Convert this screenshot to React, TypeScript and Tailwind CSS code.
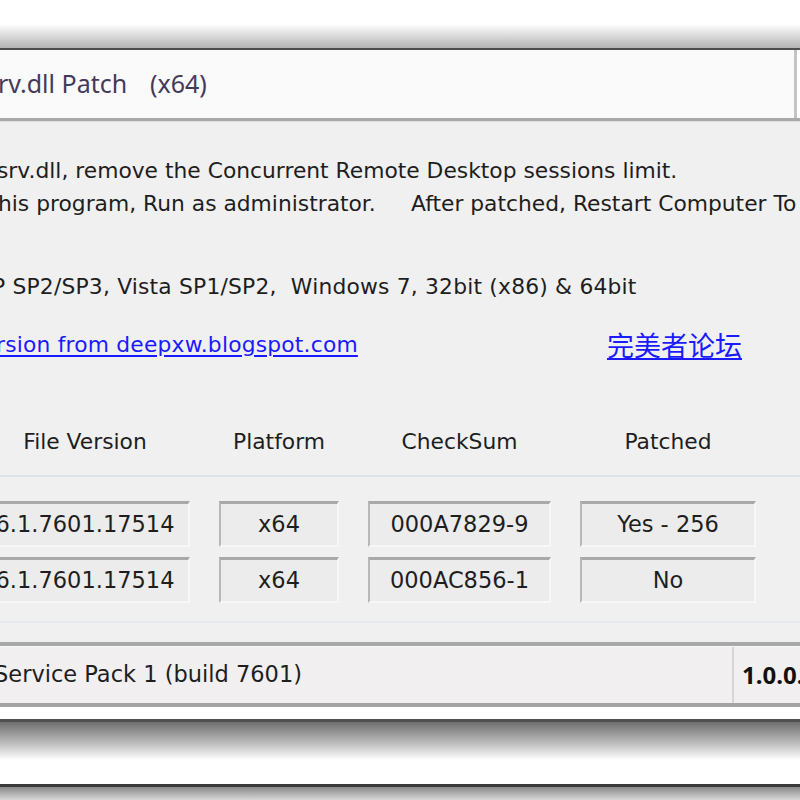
import React from 'react';

const body = "font-['DejaVu_Sans','Noto_Sans',sans-serif]";

function Field({ value }: { value: string }) {
  return (
    <div className="h-[46px] flex items-center justify-center bg-[#ececec] border-t-[3px] border-t-[#a9a9a9] border-l-[2px] border-l-[#b8b8b8] border-r-[2px] border-r-[#f7f7f7] border-b-[2px] border-b-[#f7f7f7] text-[22.5px] text-[#1e1e1e] whitespace-nowrap overflow-hidden">
      {value}
    </div>
  );
}

const headers = ['File Version', 'Platform', 'CheckSum', 'Patched'];
const rows = [
  ['6.1.7601.17514', 'x64', '000A7829-9', 'Yes - 256'],
  ['6.1.7601.17514', 'x64', '000AC856-1', 'No'],
];

export default function App() {
  return (
    <div className={`w-[800px] h-[800px] overflow-hidden bg-white flex flex-col ${body}`}>
      {/* page shadow above the window */}
      <div className="h-[48px] shrink-0 bg-gradient-to-b from-white from-50% to-[#b4b4b4]" />
      <div className="h-[2px] shrink-0 bg-[#4e4e4e]" />

      {/* title bar */}
      <div className="h-[68px] shrink-0 flex items-center bg-[#fafafa] border-r-[3px] border-r-[#c4c4c4] mr-[3px] overflow-hidden">
        <div className="ml-[-2px] flex items-baseline text-[25px] text-[#45395a] whitespace-nowrap font-['Noto_Sans',sans-serif]">
          <span className="w-[152px] shrink-0">rv.dll Patch</span>
          <span>(x64)</span>
        </div>
      </div>
      <div className="h-[3px] shrink-0 bg-[#a9a9a9]" />
      <div className="h-[1px] shrink-0 bg-[#dedede]" />

      {/* body */}
      <div className="h-[520px] shrink-0 bg-[#f0f0f0] flex flex-col overflow-hidden text-[21.8px] text-[#1e1e1e]">
        <div className="mt-[33px] h-[33px] flex items-center ml-[-3px] whitespace-nowrap">
          srv.dll, remove the Concurrent Remote Desktop sessions limit.
        </div>
        <div className="h-[33px] flex items-center ml-[-2px] whitespace-nowrap">
          <span className="w-[413px] shrink-0">his program, Run as administrator.</span>
          <span>After patched, Restart Computer To</span>
        </div>
        <div className="mt-[50px] h-[33px] flex items-center ml-[-8px] whitespace-nowrap tracking-[0.2px]">
          P SP2/SP3, Vista SP1/SP2,&nbsp; Windows 7, 32bit (x86) &amp; 64bit
        </div>
        <div className="mt-[25px] h-[33px] flex items-center ml-[-4px] whitespace-nowrap text-[#1a1aff]">
          <span className="w-[611px] shrink-0">
            <span className="underline underline-offset-[3px] tracking-[0.2px]">rsion from deepxw.blogspot.com</span>
          </span>
          <span className="underline underline-offset-[2px] text-[27px] font-['Noto_Sans_CJK_SC',sans-serif]">完美者论坛</span>
        </div>

        {/* table */}
        <div className="mt-[64px] ml-[-20px] grid grid-cols-[210px_120px_183px_176px] gap-x-[29px]">
          {headers.map((h) => (
            <div key={h} className="h-[33px] flex items-center justify-center whitespace-nowrap">
              {h}
            </div>
          ))}
        </div>
        <div className="mt-[16px] h-[2px] bg-[#dde3e8]" />
        <div className="mt-[24px] ml-[-20px] grid grid-cols-[210px_120px_183px_176px] gap-x-[29px] gap-y-[10px]">
          {rows.map((r, i) =>
            r.map((v, j) => <Field key={`${i}-${j}`} value={v} />)
          )}
        </div>
        <div className="mt-[18px] h-[2px] bg-[#e6eaee]" />
      </div>

      {/* status bar */}
      <div className="h-[4px] shrink-0 bg-[#a8a8a8]" />
      <div className="h-[1px] shrink-0 bg-[#f8f8f8]" />
      <div className="h-[56px] shrink-0 flex bg-[#f1efef] text-[22.5px] text-[#1e1e1e] whitespace-nowrap overflow-hidden">
        <div className="w-[740px] shrink-0 flex items-center ml-[-6px] border-r-2 border-r-[#d6d6d6]">
          Service Pack 1 (build 7601)
        </div>
        <div className="flex items-center pl-[8px] font-bold text-[24px] text-[#111] font-['Noto_Sans',sans-serif]">1.0.0.</div>
      </div>
      <div className="h-[4px] shrink-0 bg-[#a4a4a4]" />

      {/* page shadow below the window */}
      <div className="h-[12px] shrink-0 bg-white" />
      <div className="h-[3px] shrink-0 bg-[#505050]" />
      <div className="h-[38px] shrink-0 bg-gradient-to-b from-[#707070] to-white" />
      <div className="h-[24px] shrink-0 bg-white" />
      <div className="h-[3px] shrink-0 bg-[#3a3a3a]" />
      <div className="flex-1 bg-gradient-to-b from-[#8a8a8a] to-[#d8d8d8]" />
    </div>
  );
}
